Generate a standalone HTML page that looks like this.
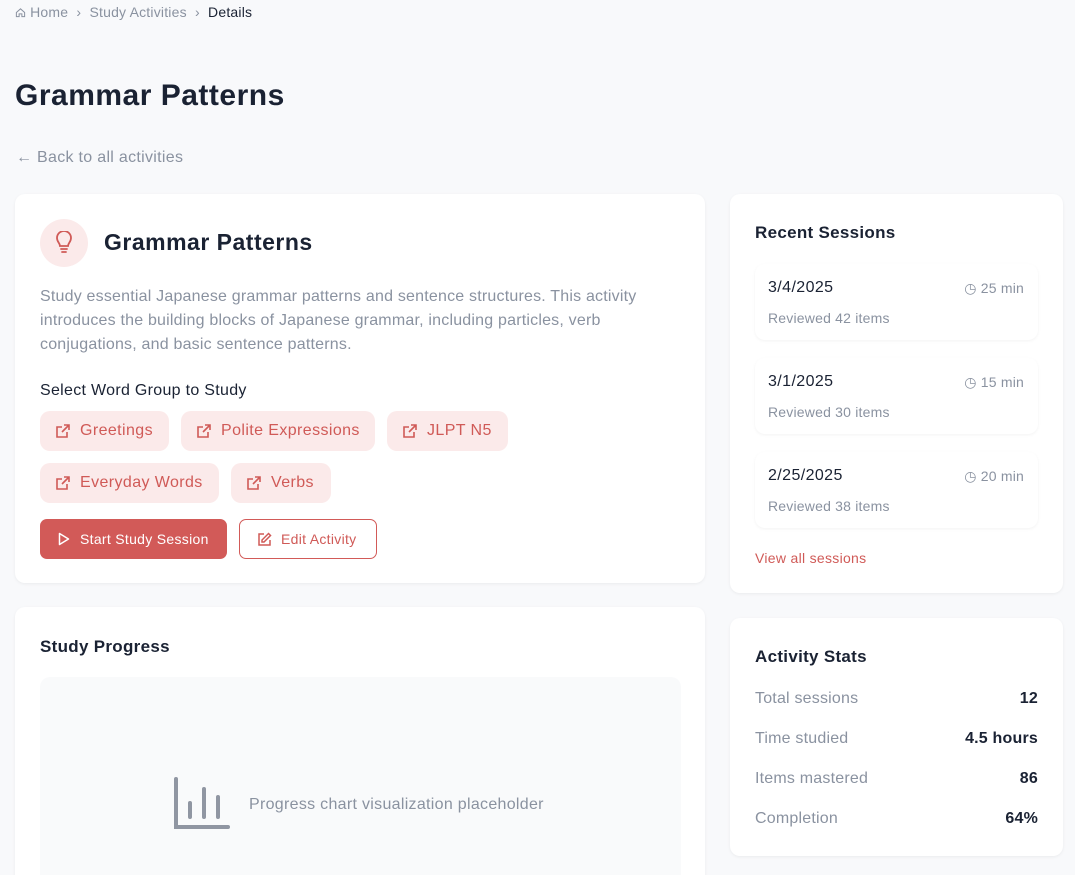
<!DOCTYPE html>
<html><head><style>
*{box-sizing:border-box;margin:0;padding:0}
html,body{width:1075px;height:875px;overflow:hidden}
body{background:#f8f9fb;font-family:"Liberation Sans",sans-serif;color:#1a2233;position:relative;letter-spacing:.2px}
.a{position:absolute}
.card{position:absolute;background:#fff;border-radius:10px;box-shadow:0 1px 3px rgba(0,0,0,.06)}
.pill{position:absolute;height:40px;background:#fbeaea;border-radius:10px;color:#d05a57;font-size:16px;line-height:40px;padding-left:40px;letter-spacing:.4px}
.pill svg{position:absolute;left:16px;top:13px}
.sess{position:absolute;left:755px;width:283px;height:76px;background:#fff;border-radius:10px;box-shadow:0 1px 3px rgba(0,0,0,.05)}
.sess .d{position:absolute;left:13px;top:15px;font-size:16px;color:#1a2233;letter-spacing:.4px}
.sess .r{position:absolute;left:13px;top:46px;font-size:14px;color:#8a92a0}
.sess .m{position:absolute;right:14px;top:16px;font-size:14px;color:#8a92a0}
.st{position:absolute;left:755px;width:283px;font-size:16px;color:#8a92a0}
.st b{position:absolute;right:0;color:#1a2233}
</style></head><body>
<div class="a" style="left:15px;top:4px;font-size:14px;color:#8a92a0">
<svg width="11" height="11" viewBox="0 0 12 12" style="vertical-align:-1px"><path d="M1.5 6L6 2l4.5 4v4.5h-3v-3h-3v3h-3z" fill="none" stroke="#8a92a0" stroke-width="1.1"/></svg> Home &nbsp;›&nbsp; Study Activities &nbsp;›&nbsp; <span style="color:#1a2233">Details</span></div>
<div class="a" style="left:15px;top:79px;font-size:30px;font-weight:bold;letter-spacing:.5px">Grammar Patterns</div>
<div class="a" style="left:16px;top:149px;font-size:16px;color:#8a92a0;letter-spacing:.3px">← Back to all activities</div>

<div class="card" style="left:15px;top:194px;width:690px;height:389px"></div>
<div class="a" style="left:40px;top:219px;width:48px;height:48px;border-radius:50%;background:#fbeaea"></div>
<svg class="a" style="left:54px;top:231px" width="20" height="24" viewBox="0 0 20 24"><path d="M6 15c0-3-3-4-3-8a7 7 0 0114 0c0 4-3 5-3 8zM7 18h6M8 21h4" fill="none" stroke="#d05a57" stroke-width="1.8" stroke-linecap="round"/></svg>
<div class="a" style="left:104px;top:229px;font-size:23px;font-weight:bold;letter-spacing:.5px">Grammar Patterns</div>
<div class="a" style="left:40px;top:285px;width:640px;font-size:16px;line-height:24px;color:#8a92a0">Study essential Japanese grammar patterns and sentence structures. This activity introduces the building blocks of Japanese grammar, including particles, verb conjugations, and basic sentence patterns.</div>
<div class="a" style="left:40px;top:382px;font-size:16px;letter-spacing:.3px">Select Word Group to Study</div>
<div class="pill" style="left:40px;top:411px;width:129px"><svg width="14" height="14" viewBox="0 0 14 14"><path d="M8 1h5v5M13 1L6 8M11 8v5H1V3h5" fill="none" stroke="#d05a57" stroke-width="1.6"/></svg>Greetings</div>
<div class="pill" style="left:181px;top:411px;width:194px"><svg width="14" height="14" viewBox="0 0 14 14"><path d="M8 1h5v5M13 1L6 8M11 8v5H1V3h5" fill="none" stroke="#d05a57" stroke-width="1.6"/></svg>Polite Expressions</div>
<div class="pill" style="left:387px;top:411px;width:121px"><svg width="14" height="14" viewBox="0 0 14 14"><path d="M8 1h5v5M13 1L6 8M11 8v5H1V3h5" fill="none" stroke="#d05a57" stroke-width="1.6"/></svg>JLPT N5</div>
<div class="pill" style="left:40px;top:463px;width:179px"><svg width="14" height="14" viewBox="0 0 14 14"><path d="M8 1h5v5M13 1L6 8M11 8v5H1V3h5" fill="none" stroke="#d05a57" stroke-width="1.6"/></svg>Everyday Words</div>
<div class="pill" style="left:231px;top:463px;width:100px"><svg width="14" height="14" viewBox="0 0 14 14"><path d="M8 1h5v5M13 1L6 8M11 8v5H1V3h5" fill="none" stroke="#d05a57" stroke-width="1.6"/></svg>Verbs</div>
<div class="a" style="left:40px;top:519px;width:187px;height:40px;background:#d25a58;border-radius:7px;color:#fff;font-size:14px;line-height:40px;padding-left:40px;letter-spacing:.3px"><svg class="a" style="left:18px;top:13px" width="12" height="14" viewBox="0 0 12 14"><path d="M1.5 1.5v11l9-5.5z" fill="none" stroke="#fff" stroke-width="1.5" stroke-linejoin="round"/></svg>Start Study Session</div>
<div class="a" style="left:239px;top:519px;width:138px;height:40px;border:1px solid #d25a58;border-radius:7px;color:#d05a57;font-size:14px;line-height:38px;padding-left:41px;background:#fff;letter-spacing:.3px"><svg class="a" style="left:17px;top:12px" width="15" height="15" viewBox="0 0 15 15"><path d="M7 2H2v11h11V8M11.5 1.5l2 2L7 10H5V8z" fill="none" stroke="#d05a57" stroke-width="1.5"/></svg>Edit Activity</div>

<div class="card" style="left:15px;top:607px;width:690px;height:300px"></div>
<div class="a" style="left:40px;top:637px;font-size:17px;font-weight:bold;letter-spacing:.3px">Study Progress</div>
<div class="a" style="left:40px;top:677px;width:641px;height:220px;background:#f9fafb;border-radius:10px"></div>
<svg class="a" style="left:172px;top:777px" width="58" height="56" viewBox="0 0 58 56"><path d="M4 2v48h52M18 40V26M32 40V12M46 40V20" fill="none" stroke="#9096a2" stroke-width="4" stroke-linecap="round"/></svg>
<div class="a" style="left:249px;top:796px;font-size:16px;color:#8a92a0;letter-spacing:.3px">Progress chart visualization placeholder</div>

<div class="card" style="left:730px;top:194px;width:333px;height:399px"></div>
<div class="a" style="left:755px;top:223px;font-size:17px;font-weight:bold;letter-spacing:.3px">Recent Sessions</div>
<div class="sess" style="top:264px"><div class="d">3/4/2025</div><div class="m">◷ 25 min</div><div class="r">Reviewed 42 items</div></div>
<div class="sess" style="top:358px"><div class="d">3/1/2025</div><div class="m">◷ 15 min</div><div class="r">Reviewed 30 items</div></div>
<div class="sess" style="top:452px"><div class="d">2/25/2025</div><div class="m">◷ 20 min</div><div class="r">Reviewed 38 items</div></div>
<div class="a" style="left:755px;top:550px;font-size:14px;color:#d05a57;letter-spacing:.3px">View all sessions</div>

<div class="card" style="left:730px;top:618px;width:333px;height:238px"></div>
<div class="a" style="left:755px;top:647px;font-size:17px;font-weight:bold;letter-spacing:.3px">Activity Stats</div>
<div class="st" style="top:690px">Total sessions<b>12</b></div>
<div class="st" style="top:730px">Time studied<b>4.5 hours</b></div>
<div class="st" style="top:770px">Items mastered<b>86</b></div>
<div class="st" style="top:810px">Completion<b>64%</b></div>
</body></html>
